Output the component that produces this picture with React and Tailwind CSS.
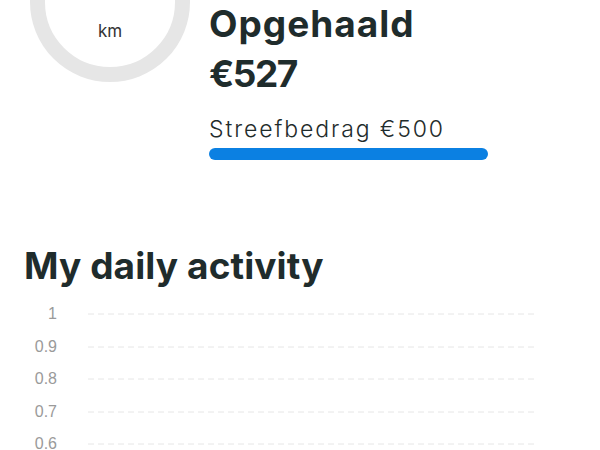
const ticks = ['1', '0.9', '0.8', '0.7', '0.6']

function GridRow({ label }) {
  return (
    <div className="flex h-[32.5px] items-center">
      <div className="w-[57px] text-right text-[16px] text-[#9a9a9a] font-['Liberation_Sans',sans-serif]">
        {label}
      </div>
      <svg className="ml-[31px] w-[447px] h-[2px]" viewBox="0 0 447 2" preserveAspectRatio="none">
        <line x1="0" y1="1" x2="447" y2="1" stroke="#e6e6e6" strokeWidth="1" strokeDasharray="6 4" />
      </svg>
    </div>
  )
}

export default function App() {
  return (
    <div className="w-[600px] h-[450px] overflow-hidden bg-white font-['Inter',sans-serif] text-[#1f2c2c]">
      <div className="flex">
        <div className="ml-[30px] mt-[-78px] w-[160px] h-[160px] shrink-0 rounded-full border-[15px] border-[#e6e6e6] flex flex-col items-center pt-[82px]">
          <span className="text-[17px] leading-[24px] text-[#333]">km</span>
        </div>
        <div className="ml-[19px] flex flex-col">
          <div className="text-[37px] leading-[50px] font-bold tracking-[1px] -mt-[1px]">Opgehaald</div>
          <div className="text-[37px] leading-[50px] font-bold tracking-[-1.5px]">€527</div>
          <div className="mt-[16px] text-[23px] leading-[28px] font-light tracking-[1.9px]">Streefbedrag €500</div>
          <div className="mt-[5px] w-[279px] h-[12px] rounded-full bg-[#0b80e2]" />
        </div>
      </div>
      <h2 className="mt-[84px] ml-[24px] text-[37px] leading-[44px] font-bold tracking-[0.1px]">My daily activity</h2>
      <div className="mt-[10px]">
        {ticks.map((t) => (
          <GridRow key={t} label={t} />
        ))}
      </div>
    </div>
  )
}
